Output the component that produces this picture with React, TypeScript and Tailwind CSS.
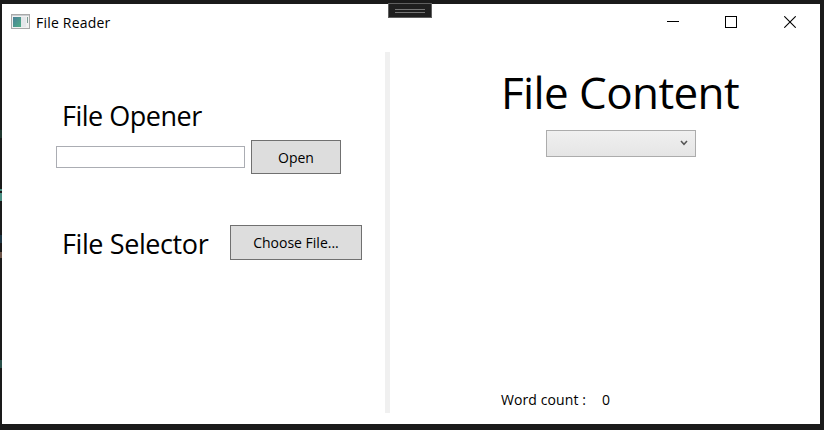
import React from "react";

function AppIcon() {
  return (
    <svg width="19" height="16" viewBox="0 0 19 16" shapeRendering="crispEdges">
      <defs>
        <linearGradient id="pane" x1="0" y1="0" x2="1" y2="1">
          <stop offset="0" stopColor="#4a7f98" />
          <stop offset="1" stopColor="#4fae86" />
        </linearGradient>
      </defs>
      <rect x="0.5" y="0.5" width="18" height="14" fill="#f1f1f1" stroke="#a9a9a9" />
      <rect x="1" y="1" width="17" height="1" fill="#c9cdd1" />
      <rect x="2" y="3" width="8" height="10" fill="url(#pane)" />
      <rect x="10" y="3" width="5" height="10" fill="#e4e7ea" />
      <rect x="16" y="3" width="1" height="6" fill="#7d9c94" />
    </svg>
  );
}

function TitleBar() {
  return (
    <header className="flex h-9 items-start pl-[9px]">
      <div className="mt-[10px]">
        <AppIcon />
      </div>
      <span className="ml-[6px] mt-[9px] text-[14px] leading-5 tracking-[0.2px]">File Reader</span>
      <div className="ml-auto mr-[24px] mt-[12px] flex">
        <svg className="mr-[46px]" width="12" height="12" shapeRendering="crispEdges">
          <path d="M0 5.5H12" stroke="#000" />
        </svg>
        <svg className="mr-[47px]" width="12" height="12" shapeRendering="crispEdges">
          <rect x="0.5" y="0.5" width="11" height="11" fill="none" stroke="#000" />
        </svg>
        <svg width="12" height="12">
          <path d="M0.3 0.3L11.7 11.7M11.7 0.3L0.3 11.7" stroke="#000" strokeWidth="1.1" />
        </svg>
      </div>
    </header>
  );
}

export default function App() {
  return (
    <div className="relative h-[430px] w-[824px] overflow-hidden bg-[#1a1a1a] pb-[6px] pl-[2px] pr-[4px] pt-[4px] font-['Open_Sans','Noto_Sans',sans-serif] font-normal text-black">
      <div className="absolute left-0 top-[130px] h-[8px] w-[2px] bg-[#20372f]" />
      <div className="absolute left-0 top-[189px] h-[2px] w-[2px] bg-[#4a8e82]" />
      <div className="absolute left-0 top-[193px] h-[8px] w-[2px] bg-[#4a8e82]" />
      <div className="absolute left-0 top-[235px] h-[8px] w-[2px] bg-[#1e3744]" />
      <div className="absolute left-0 top-[252px] h-[6px] w-[2px] bg-[#6b5347]" />
      <div className="absolute left-0 top-[360px] h-[8px] w-[2px] bg-[#29504a]" />
      <div className="absolute left-[388px] top-[3px] flex h-[15px] w-[44px] flex-col items-center justify-center gap-[2px] border border-[#5f5f5f] bg-[#1f1f1f]">
        <div className="h-px w-[30px] bg-[#767676]" />
        <div className="h-px w-[30px] bg-[#767676]" />
      </div>

      <main className="h-[420px] w-[818px] bg-white">
        <TitleBar />
        <div className="flex h-[384px] pb-[11px] pt-[12px]">
          <section className="w-[383px] pl-[54px]">
            <h2 className="mt-[44px] h-[40px] whitespace-nowrap pl-[6px] text-[27px] leading-[40px] font-normal tracking-[-0.5px]">
              File Opener
            </h2>
            <div className="mt-[4px] flex items-start gap-[6px]">
              <input className="mt-[6px] h-[22px] w-[189px] border border-[#abadb3] bg-white outline-none" />
              <button className="h-[34px] w-[90px] border border-[#707070] bg-[#dddddd] pt-px text-[14px] leading-none">
                Open
              </button>
            </div>
            <div className="mt-[51px] flex items-start">
              <h2 className="h-[36px] w-[174px] whitespace-nowrap pl-[6px] text-[27px] leading-[37px] font-normal tracking-[-0.4px]">
                File Selector
              </h2>
              <button className="h-[35px] w-[132px] shrink-0 border border-[#707070] bg-[#dddddd] text-[14px] leading-none">
                Choose File...
              </button>
            </div>
          </section>
          <div className="h-[361px] w-[5px] bg-[#f0f0f0]" />
          <section className="flex flex-1 flex-col">
            <h1 className="mt-[10px] h-[60px] whitespace-nowrap pl-[111px] text-[44px] leading-[60px] font-normal tracking-[-0.6px]">
              File Content
            </h1>
            <div className="ml-[156px] mt-[8px] flex h-[27px] w-[150px] items-center justify-end border border-[#acacac] bg-linear-to-b from-[#f0f0f0] to-[#e5e5e5] pr-[7px]">
              <svg width="8" height="6" className="mb-[2px]">
                <path d="M1 1L4 4.3L7 1" fill="none" stroke="#555" strokeWidth="1.5" />
              </svg>
            </div>
            <div className="mb-[3px] ml-[111px] mt-auto flex h-[20px] text-[14px] leading-5">
              <span className="w-[101px] tracking-[0.1px]">Word count :</span>
              <span>0</span>
            </div>
          </section>
        </div>
      </main>
    </div>
  );
}
